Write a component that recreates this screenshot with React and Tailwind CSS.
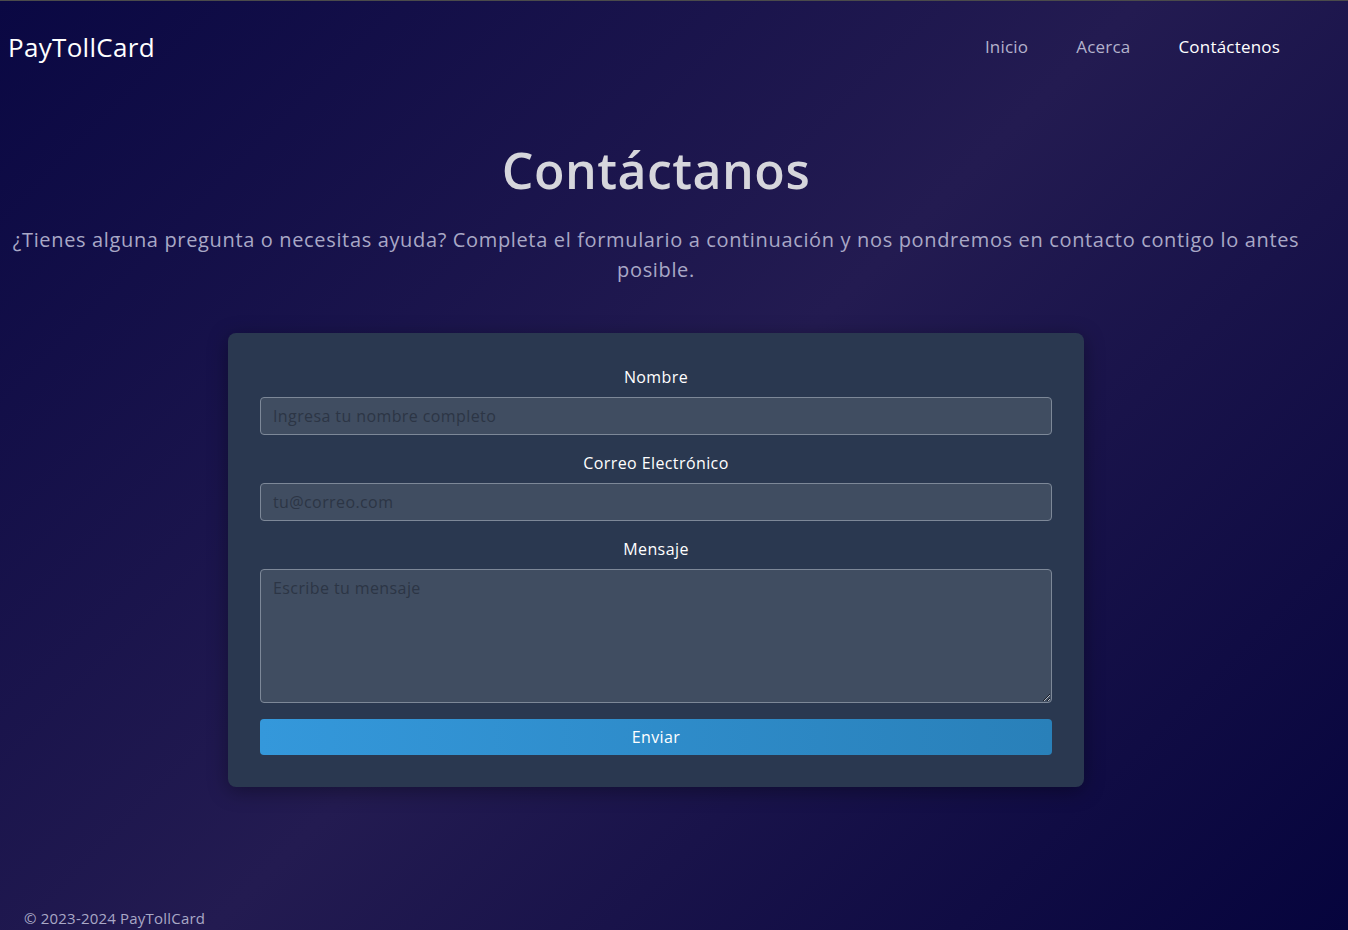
import { useState } from 'react'

export default function App() {
  const [form, setForm] = useState({ nombre: '', correo: '', mensaje: '' })

  const update = (k) => (e) => setForm({ ...form, [k]: e.target.value })

  const field =
    'h-[38px] mb-4 rounded border border-[#7d8898] bg-[#404d61] px-3 text-[16px] tracking-[0.4px] text-white placeholder:text-[#2c3545] outline-none'

  return (
    <div
      className="min-h-screen h-[930px] flex flex-col border-t border-[#4b4b4b] bg-[linear-gradient(135deg,#0a0843_0%,#231b51_50%,#06043d_100%)] text-white"
      style={{ fontFamily: '"Open Sans", "Noto Sans", sans-serif' }}
    >
      <div className="w-[1312px] flex flex-col">
        <header className="h-[92px] flex items-center justify-between pl-2 pr-8">
          <span className="text-[26px] tracking-[0.3px] text-white">PayTollCard</span>
          <nav className="flex items-center gap-12 text-[17px] tracking-[0.2px]">
            <a href="#" className="text-[#b4b2cc]">Inicio</a>
            <a href="#" className="text-[#b4b2cc]">Acerca</a>
            <a href="#" className="text-white">Contáctenos</a>
          </nav>
        </header>

        <main className="flex flex-col items-center">
          <h1 className="mt-[48px] text-[50px] leading-[58px] font-semibold text-[#d6d6dc] tracking-[0.5px]">Contáctanos</h1>
          <p className="mt-[26px] px-3 text-center text-[20px] leading-[30px] tracking-[0.65px] text-[#a9a8c6]">
            ¿Tienes alguna pregunta o necesitas ayuda? Completa el formulario a continuación y nos pondremos en contacto contigo lo antes posible.
          </p>

          <form
            onSubmit={(e) => e.preventDefault()}
            className="mt-[48px] w-[856px] rounded-lg bg-[#2a3850] p-8 flex flex-col shadow-[0_4px_20px_rgba(0,0,0,0.35)]"
          >
            <label className="text-center text-[16px] leading-6 tracking-[0.4px] mb-2">Nombre</label>
            <input
              value={form.nombre}
              onChange={update('nombre')}
              placeholder="Ingresa tu nombre completo"
              className={field}
            />
            <label className="text-center text-[16px] leading-6 tracking-[0.4px] mb-2">Correo Electrónico</label>
            <input
              value={form.correo}
              onChange={update('correo')}
              placeholder="tu@correo.com"
              className={field}
            />
            <label className="text-center text-[16px] leading-6 tracking-[0.4px] mb-2">Mensaje</label>
            <textarea
              value={form.mensaje}
              onChange={update('mensaje')}
              placeholder="Escribe tu mensaje"
              className="h-[134px] mb-4 rounded border border-[#7d8898] bg-[#404d61] px-3 py-[6px] text-[16px] tracking-[0.4px] text-white placeholder:text-[#2c3545] outline-none"
            />
            <button
              type="submit"
              className="h-[36px] rounded bg-[linear-gradient(90deg,#3498db,#2980b9)] text-[16px] tracking-[0.4px] text-white"
            >
              Enviar
            </button>
          </form>
        </main>
      </div>

      <footer className="mt-auto px-6 pb-[2px] text-[15px] leading-5 tracking-[0.2px] text-[#a9a8c6]">
        © 2023-2024 PayTollCard
      </footer>
    </div>
  )
}
